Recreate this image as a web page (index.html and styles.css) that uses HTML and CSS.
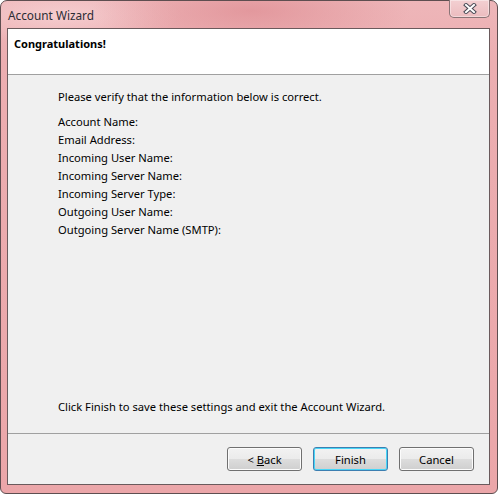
FILE: index.html
```html
<!DOCTYPE html>
<html lang="en">
<head>
    <meta charset="UTF-8">
    <title>Account Wizard</title>
    <link rel="stylesheet" href="styles.css">
</head>
<body>
    <div class="window">
        <div class="titlebar">
            <span class="title">Account Wizard</span>
            <div class="close">
                <svg width="14" height="11" viewBox="0 0 14 11">
                    <path d="M3 2 L11 9 M11 2 L3 9" stroke="#4a4a55" stroke-width="4" stroke-linecap="square"/>
                    <path d="M3 2 L11 9 M11 2 L3 9" stroke="#ffffff" stroke-width="2" stroke-linecap="square"/>
                </svg>
            </div>
        </div>
        <div class="client">
            <div class="page-header">
                <h1>Congratulations!</h1>
            </div>
            <div class="page-body">
                <p class="intro">Please verify that the information below is correct.</p>
                <ul class="summary">
                    <li>Account Name:</li>
                    <li>Email Address:</li>
                    <li>Incoming User Name:</li>
                    <li>Incoming Server Name:</li>
                    <li>Incoming Server Type:</li>
                    <li>Outgoing User Name:</li>
                    <li>Outgoing Server Name (SMTP):</li>
                </ul>
                <p class="outro">Click Finish to save these settings and exit the Account Wizard.</p>
            </div>
            <div class="buttons">
                <button type="button">&lt; <u>B</u>ack</button>
                <button type="button" class="default">Finish</button>
                <button type="button" class="cancel">Cancel</button>
            </div>
        </div>
    </div>
</body>
</html>
```

FILE: styles.css
```css
body {
    margin: 0;
    padding: 0;
    background-color: #ffffff;
    font-family: "Noto Sans", "Open Sans", sans-serif;
    font-size: 11.2px;
}
.window {
    box-sizing: border-box;
    width: 498px;
    height: 494px;
    padding: 0 7px 8px 6px;
    border: 1px solid #5e4e50;
    border-radius: 7px 7px 6px 6px;
    background:
        radial-gradient(ellipse 160px 40px at 250px 10px, rgba(222, 140, 146, 0.7), rgba(222, 140, 146, 0)),
        radial-gradient(ellipse 120px 30px at 60px 14px, rgba(250, 220, 222, 0.6), rgba(250, 220, 222, 0)),
        linear-gradient(#eeb6b9, #ecaeb1 60px, #eba6a9);
    display: flex;
    flex-direction: column;
}
.titlebar {
    height: 27px;
    display: flex;
    align-items: flex-start;
    flex-shrink: 0;
}
.title {
    margin: 6px 0 0 1px;
    color: #2c2c34;
    font-size: 11.8px;
}
.close {
    margin-left: auto;
    margin-top: -1px;
    width: 41px;
    height: 18px;
    box-sizing: border-box;
    border: 1px solid #8a7476;
    border-top: none;
    border-radius: 0 0 5px 5px;
    background: linear-gradient(#f3d0d2, #ecbcbf);
    box-shadow: inset 0 0 0 1px rgba(255, 255, 255, 0.4);
    display: flex;
    align-items: center;
    justify-content: center;
}
.client {
    flex: 1;
    border: 1px solid #6a5a5c;
    background-color: #f0f0f0;
    display: flex;
    flex-direction: column;
}
.page-header {
    height: 46px;
    background-color: #ffffff;
    border-bottom: 1px solid #a0a0a0;
    padding: 7px 0 0 6px;
    box-sizing: border-box;
}
.page-header h1 {
    margin: 0;
    font-size: 11px;
    font-weight: bold;
    color: #000000;
}
.page-body {
    flex: 1;
    padding: 13px 0 0 50px;
    border-bottom: 1px solid #a0a0a0;
    display: flex;
    flex-direction: column;
    color: #000000;
}
.intro {
    margin: 0 0 7px 0;
    line-height: 18px;
}
.summary {
    list-style: none;
    margin: 0;
    padding: 0;
}
.summary li {
    line-height: 18px;
}
.outro {
    margin: auto 0 17px 0;
    line-height: 18px;
}
.buttons {
    height: 50px;
    box-sizing: border-box;
    padding: 13px 15px 0 0;
    display: flex;
    justify-content: flex-end;
    gap: 11px;
}
.buttons button {
    width: 75px;
    height: 24px;
    font-family: inherit;
    font-size: 11.2px;
    color: #000000;
    border: 1px solid #707070;
    border-radius: 3px;
    background: linear-gradient(#f2f2f2, #ebebeb 50%, #dddddd 50%, #cfcfcf);
    box-shadow: inset 0 0 0 1px #fcfcfc;
    padding: 0;
}
.buttons button.default {
    border-color: #3c7fb1;
    box-shadow: inset 0 0 0 1px #48d6f7;
}
```
